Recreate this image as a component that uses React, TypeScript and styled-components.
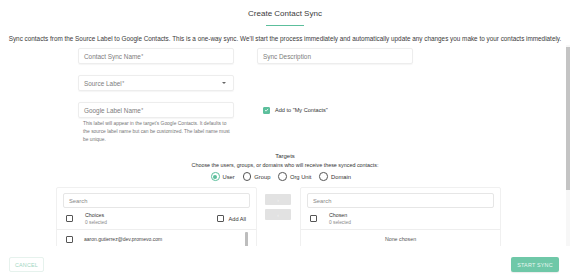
import React from "react";
import styled, { createGlobalStyle, css } from "styled-components";

const GREEN = "#5cbf9c";

const Global = createGlobalStyle`
  html, body { margin: 0; padding: 0; background: #fff; }
  body { font-family: "Liberation Sans", Arial, sans-serif; color: #333; }
  * { box-sizing: border-box; }
`;

const Page = styled.div`
  width: 570px;
  height: 276px;
  display: flex;
  flex-direction: column;
  overflow: hidden;
  background: #fff;
`;

const Header = styled.header`
  height: 45px;
  display: flex;
  flex-direction: column;
  align-items: center;
  padding-top: 9px;
`;

const Title = styled.h1`
  margin: 0;
  font-size: 8px;
  font-weight: 400;
  line-height: 10px;
  color: #3a3a3a;
`;

const Underline = styled.div`
  width: 38px;
  height: 1px;
  background: ${GREEN};
  margin-top: 6px;
`;

const Description = styled.p`
  margin: 9px 0 0;
  font-size: 6.36px;
  line-height: 8px;
  color: #3a3a3a;
  white-space: nowrap;
`;

const ScrollFrame = styled.div`
  flex: 1;
  position: relative;
  min-height: 0;
`;

const Scroll = styled.div`
  height: 100%;
  overflow: hidden;
`;

const ScrollTrack = styled.div`
  position: absolute;
  top: 0;
  right: 0;
  bottom: 0;
  width: 4px;
  background: #f7f7f7;
`;

const ScrollThumb = styled.div`
  position: absolute;
  top: 2px;
  right: 0;
  width: 4px;
  height: 143px;
  background: #c4c4c4;
`;

const Content = styled.div`
  padding-top: 3px;
  padding-bottom: 10px;
`;

const FormGrid = styled.div`
  display: grid;
  grid-template-columns: 156px 156px;
  column-gap: 23px;
  row-gap: 11px;
  padding-left: 78px;
  align-items: center;
`;

const Field = styled.div`
  height: 16px;
  border: 1px solid #ededed;
  border-radius: 2px;
  box-shadow: 0 0.5px 1px rgba(0, 0, 0, 0.04);
  display: flex;
  align-items: center;
  justify-content: space-between;
  padding: 0 7px 0 5px;
  font-size: 6.4px;
  color: #7d7d7d;
`;

const Star = styled.span`
  font-size: 5px;
  vertical-align: top;
  margin-left: 0.5px;
`;

const Caret = styled.span`
  width: 0;
  height: 0;
  border-left: 2px solid transparent;
  border-right: 2px solid transparent;
  border-top: 2.5px solid #666;
`;

const Helper = styled.div`
  grid-column: 1;
  margin-top: -9px;
  padding-left: 5px;
  font-size: 4.9px;
  line-height: 8px;
  color: #777;
`;

const CheckLabel = styled.label`
  display: flex;
  align-items: center;
  gap: 5px;
  padding-left: 6px;
  font-size: 5.6px;
  color: #333;
`;

const Box = styled.span<{ $checked?: boolean }>`
  width: 7px;
  height: 7px;
  flex: none;
  border-radius: 1px;
  display: inline-flex;
  align-items: center;
  justify-content: center;
  ${(p) =>
    p.$checked
      ? css`
          background: ${GREEN};
          border: 1px solid ${GREEN};
        `
      : css`
          border: 0.8px solid #555;
          background: #fff;
        `}
`;

const Targets = styled.section`
  margin-top: 8px;
  display: flex;
  flex-direction: column;
  align-items: center;
`;

const TargetsTitle = styled.div`
  font-size: 6px;
  line-height: 8px;
  color: #333;
`;

const TargetsNote = styled.div`
  margin-top: 1px;
  font-size: 5.4px;
  line-height: 8px;
  color: #333;
`;

const RadioRow = styled.div`
  margin-top: 2px;
  margin-right: 8px;
  height: 11px;
  display: flex;
  align-items: center;
  gap: 8px;
  font-size: 5.8px;
  color: #333;
`;

const RadioItem = styled.label`
  display: flex;
  align-items: center;
  gap: 3px;
`;

const RadioCircle = styled.span<{ $on?: boolean }>`
  width: 8.5px;
  height: 8.5px;
  border-radius: 50%;
  border: 0.8px solid ${(p) => (p.$on ? GREEN : "#555")};
  display: inline-flex;
  align-items: center;
  justify-content: center;
  &::after {
    content: "";
    width: 4px;
    height: 4px;
    border-radius: 50%;
    background: ${(p) => (p.$on ? GREEN : "transparent")};
  }
`;

const Transfer = styled.div`
  margin-top: 5px;
  margin-left: 56px;
  display: flex;
  align-items: flex-start;
`;

const Card = styled.div`
  width: 201px;
  border: 1px solid #f0f0f0;
  border-radius: 2px;
  padding: 5px 6px 0;
`;

const Search = styled.div`
  height: 15px;
  border: 1px solid #e6e6e6;
  border-radius: 2px;
  display: flex;
  align-items: center;
  padding-left: 5px;
  font-size: 5.8px;
  color: #888;
`;

const ListHeader = styled.div`
  height: 22px;
  display: flex;
  align-items: center;
  margin: 0 -6px;
  padding: 0 10px 0 9px;
  border-bottom: 1px solid #eee;
`;

const HeaderText = styled.div`
  flex: 1;
  margin-left: 12px;
  display: flex;
  flex-direction: column;
  font-size: 5.3px;
  line-height: 8px;
  color: #333;
`;

const SubText = styled.span`
  color: #888;
  font-size: 4.8px;
`;

const AddAll = styled.label`
  display: flex;
  align-items: center;
  gap: 5px;
  font-size: 5.6px;
  color: #333;
`;

const ListFrame = styled.div`
  position: relative;
  height: 60px;
`;

const List = styled.div`
  height: 100%;
  overflow: hidden;
`;

const ListThumb = styled.div`
  position: absolute;
  top: 2px;
  right: 2px;
  width: 3px;
  height: 20px;
  border-radius: 1px;
  background: #bdbdbd;
`;

const Item = styled.div`
  height: 18px;
  display: flex;
  align-items: center;
  gap: 11px;
  padding-left: 3px;
  font-size: 5px;
  color: #444;
`;

const Empty = styled.div`
  height: 18px;
  display: flex;
  align-items: center;
  justify-content: center;
  font-size: 5.3px;
  color: #555;
`;

const Middle = styled.div`
  width: 43px;
  padding: 7px 0 0 8px;
  display: flex;
  flex-direction: column;
  gap: 4px;
`;

const MoveBtn = styled.div`
  width: 26px;
  height: 11px;
  background: #e2e2e2;
  border-radius: 1px;
  display: flex;
  align-items: center;
  justify-content: center;
  font-size: 5px;
  color: #f4f4f4;
`;

const Footer = styled.footer`
  height: 30px;
  display: flex;
  align-items: flex-start;
  justify-content: space-between;
  padding: 11px 11px 0 9px;
`;

const BaseBtn = styled.button`
  height: 15px;
  border-radius: 2px;
  font-family: "Liberation Sans", Arial, sans-serif;
  font-size: 5.4px;
  letter-spacing: 0.2px;
  text-transform: uppercase;
  padding: 0;
  cursor: pointer;
`;

const CancelBtn = styled(BaseBtn)`
  width: 35px;
  background: #fff;
  border: 1px solid #e6f2ed;
  color: #9fd6c2;
`;

const StartBtn = styled(BaseBtn)`
  width: 48px;
  background: #6fc8a8;
  border: none;
  color: #e9f7f1;
  box-shadow: 0 1px 1px rgba(0, 0, 0, 0.08);
`;

const Check = () => (
  <svg width="6" height="6" viewBox="0 0 10 10">
    <path d="M2 5.2 L4.2 7.3 L8.2 2.8" fill="none" stroke="#fff" strokeWidth="1.6" />
  </svg>
);

const emails = [
  "aaron.gutierrez@dev.promevo.com",
  "abigail.moore@dev.promevo.com",
  "adam.nelson@dev.promevo.com",
];

export default function App() {
  return (
    <Page>
      <Global />
      <Header>
        <Title>Create Contact Sync</Title>
        <Underline />
        <Description>
          Sync contacts from the Source Label to Google Contacts. This is a one-way sync. We'll start the
          process immediately and automatically update any changes you make to your contacts immediately.
        </Description>
      </Header>
      <ScrollFrame>
        <Scroll>
          <Content>
            <FormGrid>
              <Field>
                <span>
                  Contact Sync Name<Star>*</Star>
                </span>
              </Field>
              <Field>
                <span>Sync Description</span>
              </Field>
              <Field>
                <span>
                  Source Label<Star>*</Star>
                </span>
                <Caret />
              </Field>
              <div />
              <Field>
                <span>
                  Google Label Name<Star>*</Star>
                </span>
              </Field>
              <CheckLabel>
                <Box $checked>
                  <Check />
                </Box>
                Add to "My Contacts"
              </CheckLabel>
              <Helper>
                This label will appear in the target's Google Contacts. It defaults to the source label name but
                can be customized. The label name must be unique.
              </Helper>
            </FormGrid>
            <Targets>
              <TargetsTitle>Targets</TargetsTitle>
              <TargetsNote>Choose the users, groups, or domains who will receive these synced contacts:</TargetsNote>
              <RadioRow>
                <RadioItem>
                  <RadioCircle $on />
                  User
                </RadioItem>
                <RadioItem>
                  <RadioCircle />
                  Group
                </RadioItem>
                <RadioItem>
                  <RadioCircle />
                  Org Unit
                </RadioItem>
                <RadioItem>
                  <RadioCircle />
                  Domain
                </RadioItem>
              </RadioRow>
            </Targets>
            <Transfer>
              <Card>
                <Search>Search</Search>
                <ListHeader>
                  <Box />
                  <HeaderText>
                    <span>Choices</span>
                    <SubText>0 selected</SubText>
                  </HeaderText>
                  <AddAll>
                    <Box />
                    Add All
                  </AddAll>
                </ListHeader>
                <ListFrame>
                  <List>
                    {emails.map((e) => (
                      <Item key={e}>
                        <Box />
                        {e}
                      </Item>
                    ))}
                  </List>
                  <ListThumb />
                </ListFrame>
              </Card>
              <Middle>
                <MoveBtn>›</MoveBtn>
                <MoveBtn>‹</MoveBtn>
              </Middle>
              <Card>
                <Search>Search</Search>
                <ListHeader>
                  <Box />
                  <HeaderText>
                    <span>Chosen</span>
                    <SubText>0 selected</SubText>
                  </HeaderText>
                </ListHeader>
                <Empty>None chosen</Empty>
              </Card>
            </Transfer>
          </Content>
        </Scroll>
        <ScrollTrack />
        <ScrollThumb />
      </ScrollFrame>
      <Footer>
        <CancelBtn>Cancel</CancelBtn>
        <StartBtn>Start Sync</StartBtn>
      </Footer>
    </Page>
  );
}
